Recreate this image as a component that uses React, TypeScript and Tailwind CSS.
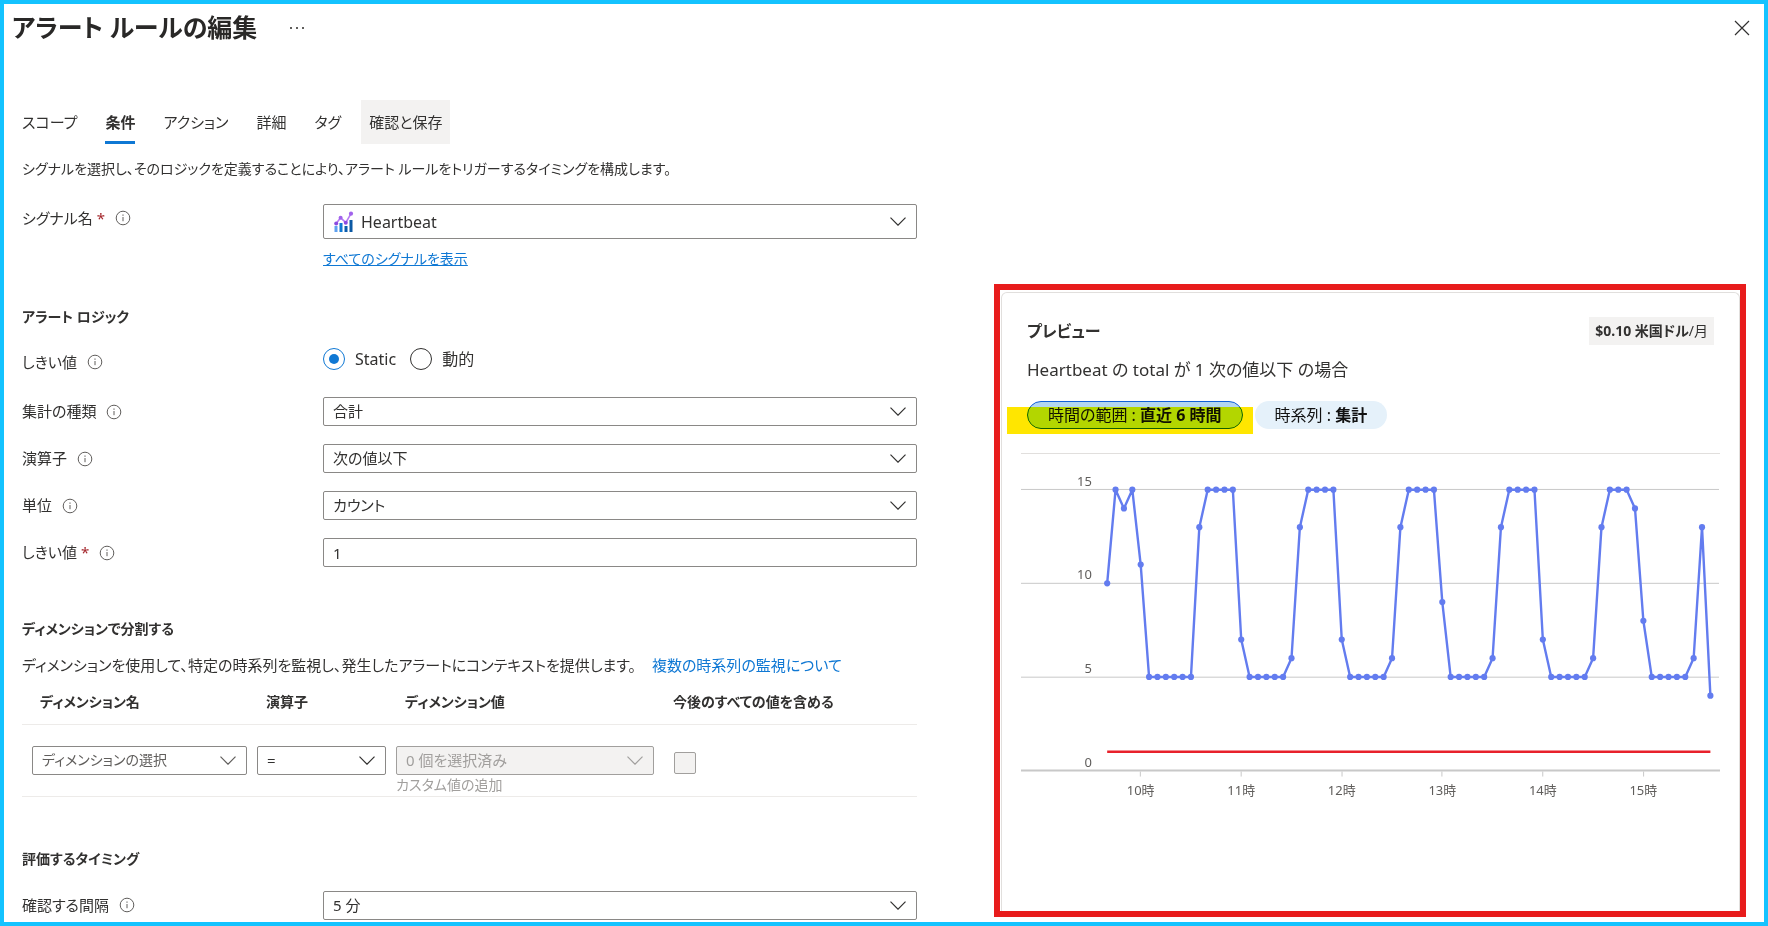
import { useId, useState, type ReactNode } from "react";

const SERIES = [
  10, 15, 14, 15, 11, 5, 5, 5, 5, 5, 5, 13, 15, 15, 15, 15, 7, 5, 5, 5, 5, 5, 6, 13, 15, 15, 15, 15, 7, 5, 5, 5, 5, 5,
  6, 13, 15, 15, 15, 15, 9, 5, 5, 5, 5, 5, 6, 13, 15, 15, 15, 15, 7, 5, 5, 5, 5, 5, 6, 13, 15, 15, 15, 14, 8, 5, 5, 5,
  5, 5, 6, 13, 4,
];

const TABS = ["スコープ", "条件", "アクション", "詳細", "タグ", "確認と保存"];

const pointX = (i: number) => 86.3 + i * 8.39;
const pointY = (v: number) => 318 - v * 18.75;

function Chevron({ className }: { className: string }) {
  return (
    <svg viewBox="0 0 16 9" className={className} fill="none" stroke="currentColor" strokeWidth="1.2" aria-hidden="true">
      <path d="M0.5 0.7 8 8.2 15.5 0.7" />
    </svg>
  );
}

function InfoIcon() {
  return (
    <svg viewBox="0 0 16 16" className="size-4 shrink-0 text-[#605e5c]" fill="none" stroke="currentColor" aria-hidden="true">
      <circle cx="8" cy="8" r="6.8" strokeWidth="1" />
      <path d="M8 7v4.2" strokeWidth="1" />
      <path d="M8 4.6v1.1" strokeWidth="1.1" />
    </svg>
  );
}

function MetricIcon() {
  return (
    <svg viewBox="0 0 20 22" className="h-[22px] w-5" aria-hidden="true">
      <rect x="0.5" y="15" width="3" height="6" fill="#5ea0ef" />
      <rect x="5.5" y="12" width="3" height="9" fill="#0f78d4" />
      <rect x="10.5" y="15" width="3" height="6" fill="#0b5cad" />
      <rect x="15.5" y="9" width="3" height="12" fill="#0c59a4" />
      <path d="M2.2 12.5 6.6 6.7l5.2 5L17 2.7" fill="none" stroke="#b77af4" strokeWidth="1.6" />
      <circle cx="2.2" cy="12.5" r="2" fill="#8b4be0" />
      <circle cx="6.6" cy="6.7" r="2" fill="#a162ec" />
      <circle cx="11.8" cy="11.7" r="2" fill="#8b4be0" />
      <circle cx="17" cy="2.7" r="2.1" fill="#a162ec" />
    </svg>
  );
}

type SelectBoxProps = {
  id?: string;
  value: string;
  label?: string;
  disabled?: boolean;
  muted?: boolean;
  tall?: boolean;
  icon?: ReactNode;
};

function SelectBox({ id, value, label, disabled, muted, tall, icon }: SelectBoxProps) {
  const size = tall ? "h-[35px] text-base" : muted ? "h-[29px] text-sm" : "h-[29px] text-[15px]";
  const tone = disabled
    ? "border-[#a19f9d] bg-[#f3f2f1] text-[#a19f9d]"
    : muted
      ? "border-[#8a8886] bg-white text-[#605e5c]"
      : "border-[#8a8886] bg-white text-[#323130]";
  return (
    <div className={`relative flex w-full items-center rounded-xs border ${size} ${tone}`}>
      {icon && <span className="pointer-events-none absolute left-2.5">{icon}</span>}
      <select
        id={id}
        aria-label={label}
        disabled={disabled}
        className={`h-full w-full appearance-none bg-transparent pr-8 outline-none ${icon ? "pl-[37px]" : "pl-[9px]"}`}
      >
        <option>{value}</option>
      </select>
      <Chevron className="pointer-events-none absolute right-2.5 h-[9px] w-4" />
    </div>
  );
}

function FieldLabel({ htmlFor, text, required }: { htmlFor?: string; text: string; required?: boolean }) {
  return (
    <div className="flex h-7 items-center gap-2.5">
      <label htmlFor={htmlFor} className="text-[15px]">
        {text}
        {required && <span className="pl-1 text-[#a4262c]">*</span>}
      </label>
      <InfoIcon />
    </div>
  );
}

function FieldRow({ text, required, children }: { text: string; required?: boolean; children: (id: string) => ReactNode }) {
  const id = useId();
  return (
    <div className="grid grid-cols-[301px_minmax(0,1fr)] items-center">
      <FieldLabel htmlFor={id} text={text} required={required} />
      {children(id)}
    </div>
  );
}

function Radio({ label, checked, onSelect }: { label: string; checked: boolean; onSelect: () => void }) {
  return (
    <label className="flex h-[22px] items-center gap-2.5">
      <input
        type="radio"
        name="threshold-mode"
        checked={checked}
        onChange={onSelect}
        className="grid size-[22px] appearance-none place-items-center rounded-full border border-[#323130] before:size-2.5 before:rounded-full before:bg-transparent checked:border-[#0f78d4] checked:before:bg-[#0f78d4]"
      />
      {label}
    </label>
  );
}

function PreviewChart() {
  const line = SERIES.map((v, i) => `${pointX(i)},${pointY(v)}`).join(" ");
  return (
    <svg viewBox="0 0 700 350" className="w-full" role="img" aria-label="Heartbeat">
      <path d="M0 0.5H700" stroke="#e1dfdd" />
      {[15, 10, 5].map((v) => (
        <path key={v} d={`M0 ${Math.floor(pointY(v)) + 0.5}H699`} stroke="#c8c8c8" />
      ))}
      <path d="M0 318H700" stroke="#c8c8c8" strokeWidth="2" />
      {[15, 10, 5, 0].map((v) => (
        <text key={v} x="71" y={pointY(v) - 4} textAnchor="end" fontSize="13" fill="#605e5c">
          {v}
        </text>
      ))}
      {[10, 11, 12, 13, 14, 15].map((h, i) => (
        <g key={h}>
          <path d={`M${Math.floor(pointX(4 + i * 12)) + 0.5} 319v5`} stroke="#c8c8c8" />
          <text x={pointX(4 + i * 12)} y="342" textAnchor="middle" fontSize="13" fill="#605e5c">
            {h}時
          </text>
        </g>
      ))}
      <path d={`M${pointX(0)} ${pointY(1)}H${pointX(72)}`} stroke="#e8212b" strokeWidth="2.4" />
      <polyline points={line} fill="none" stroke="#637cef" strokeWidth="2.4" strokeLinejoin="round" />
      {SERIES.map((v, i) => (
        <circle key={i} cx={pointX(i)} cy={pointY(v)} r="3.1" fill="#637cef" />
      ))}
    </svg>
  );
}

export default function App() {
  const [tab, setTab] = useState("条件");
  const [mode, setMode] = useState("Static");

  return (
    <div className="min-h-screen border-4 border-[#14c3ff] bg-white font-['Noto_Sans','Noto_Sans_CJK_JP',sans-serif] text-base text-[#323130] [font-feature-settings:'palt']">
      <header className="flex h-12 items-center pr-3.5 pl-2">
        <h1 className="text-[25px] font-bold text-[#292827]">アラート ルールの編集</h1>
        <button type="button" aria-label="その他" className="ml-8 flex gap-1 p-px">
          <span className="size-0.5 bg-[#605e5c]" />
          <span className="size-0.5 bg-[#605e5c]" />
          <span className="size-0.5 bg-[#605e5c]" />
        </button>
        <button type="button" aria-label="閉じる" className="ml-auto">
          <svg viewBox="0 0 16 16" className="size-4" stroke="#323130" strokeWidth="1.2" aria-hidden="true">
            <path d="M1 1 15 15M15 1 1 15" />
          </svg>
        </button>
      </header>

      <div className="grid grid-cols-[895fr_752fr] gap-[77px] px-[18px] pt-12">
        <main className="min-w-0">
          <nav className="-ml-2 flex gap-3">
            {TABS.map((name) => (
              <button
                key={name}
                type="button"
                onClick={() => setTab(name)}
                className={`h-11 px-2 text-[15px] ${name === "確認と保存" ? "bg-[#f3f2f1]" : ""}`}
              >
                <span
                  className={`flex h-full items-center border-y-3 border-t-transparent ${
                    tab === name ? "border-b-[#0f78d4] font-bold" : "border-b-transparent"
                  }`}
                >
                  {name}
                </span>
              </button>
            ))}
          </nav>

          <p className="mt-[13px] text-sm leading-6">
            シグナルを選択し、そのロジックを定義することにより、アラート ルールをトリガーするタイミングを構成します。
          </p>

          <div className="mt-[23px] grid grid-cols-[301px_minmax(0,1fr)]">
            <FieldLabel htmlFor="signal" text="シグナル名" required />
            <div>
              <SelectBox id="signal" value="Heartbeat" tall icon={<MetricIcon />} />
              <a href="#signals" className="mt-2 block w-fit text-sm leading-6 text-[#0f78d4] underline">
                すべてのシグナルを表示
              </a>
            </div>
          </div>

          <h2 className="mt-[34px] text-sm leading-6 font-bold">アラート ロジック</h2>
          <div className="mt-[19px] grid h-7 grid-cols-[301px_minmax(0,1fr)] items-start">
            <FieldLabel text="しきい値" />
            <div className="flex items-center gap-3.5" role="radiogroup" aria-label="しきい値">
              <Radio label="Static" checked={mode === "Static"} onSelect={() => setMode("Static")} />
              <Radio label="動的" checked={mode === "動的"} onSelect={() => setMode("動的")} />
            </div>
          </div>

          <div className="mt-[21px] flex flex-col gap-[18px]">
            <FieldRow text="集計の種類">{(id) => <SelectBox id={id} value="合計" />}</FieldRow>
            <FieldRow text="演算子">{(id) => <SelectBox id={id} value="次の値以下" />}</FieldRow>
            <FieldRow text="単位">{(id) => <SelectBox id={id} value="カウント" />}</FieldRow>
            <FieldRow text="しきい値" required>
              {(id) => (
                <input
                  id={id}
                  type="text"
                  defaultValue="1"
                  className="h-[29px] w-full rounded-xs border border-[#8a8886] px-[9px] text-[15px] outline-none"
                />
              )}
            </FieldRow>
          </div>

          <h2 className="mt-[50px] text-sm leading-6 font-bold">ディメンションで分割する</h2>
          <p className="mt-3 text-[15px] leading-6">
            ディメンションを使用して、特定の時系列を監視し、発生したアラートにコンテキストを提供します。
            <a href="#multi" className="ml-4 text-[#0f78d4]">
              複数の時系列の監視について
            </a>
          </p>

          <table className="w-full table-fixed border-collapse text-left">
            <colgroup>
              <col className="w-[230px]" />
              <col className="w-[139px]" />
              <col className="w-[268px]" />
              <col />
            </colgroup>
            <thead>
              <tr className="h-[47px] border-b border-[#edebe9] text-sm">
                <th className="pt-1 pl-[18px] font-bold">ディメンション名</th>
                <th className="pt-1 pl-3.5 font-bold">演算子</th>
                <th className="pt-1 pl-3.5 font-bold">ディメンション値</th>
                <th className="pt-1 pl-3.5 font-bold">今後のすべての値を含める</th>
              </tr>
            </thead>
            <tbody>
              <tr className="border-b border-[#edebe9] align-top">
                <td className="pt-[21px] pr-[5px] pl-2.5">
                  <SelectBox label="ディメンション名" value="ディメンションの選択" muted />
                </td>
                <td className="pt-[21px] pr-[5px] pl-[5px]">
                  <SelectBox label="演算子" value="=" />
                </td>
                <td className="pt-[21px] pr-[5px] pl-[5px]">
                  <SelectBox label="ディメンション値" value="0 個を選択済み" disabled />
                  <button type="button" disabled className="block h-[21px] text-sm leading-5 text-[#a19f9d]">
                    カスタム値の追加
                  </button>
                </td>
                <td className="pt-[27px] pl-[15px]">
                  <input
                    type="checkbox"
                    disabled
                    aria-label="今後のすべての値を含める"
                    className="block size-[22px] appearance-none rounded-xs border border-[#a19f9d] bg-[#f3f2f1]"
                  />
                </td>
              </tr>
            </tbody>
          </table>

          <h2 className="mt-[50px] text-sm leading-6 font-bold">評価するタイミング</h2>
          <div className="mt-5">
            <FieldRow text="確認する間隔">{(id) => <SelectBox id={id} value="5 分" />}</FieldRow>
          </div>
        </main>

        <aside className="mt-[184px] mb-[3px] flex min-w-0 border-6 border-[#e81c1c]">
          <div className="mt-0.5 ml-px w-full rounded-t-md border border-b-0 border-[#e1dfdd] px-[19px]">
            <div className="flex items-center justify-between pt-6 pr-1.5 pl-1.5">
              <h2 className="text-base leading-7 font-bold">プレビュー</h2>
              <span className="bg-[#f3f2f1] px-1.5 text-sm leading-7">
                <b>$0.10 米国ドル</b>/月
              </span>
            </div>
            <p className="mt-[13px] pl-1.5 text-[17px] leading-6">Heartbeat の total が 1 次の値以下 の場合</p>
            <div className="mt-[19px] flex gap-3 pl-1.5 text-[#111]">
              <div className="relative">
                <button type="button" className="block h-7 rounded-full border border-[#1160d8] bg-[#b3d6f2] px-5 leading-6">
                  時間の範囲 : <b>直近 6 時間</b>
                </button>
                <span className="pointer-events-none absolute top-1.5 -right-2.5 -left-5 h-[27px] bg-[#ffe600] mix-blend-darken" />
              </div>
              <button type="button" className="block h-7 rounded-full bg-[#e5f1fa] px-5 leading-7">
                時系列 : <b>集計</b>
              </button>
            </div>
            <div className="mt-6">
              <PreviewChart />
            </div>
          </div>
        </aside>
      </div>
    </div>
  );
}
